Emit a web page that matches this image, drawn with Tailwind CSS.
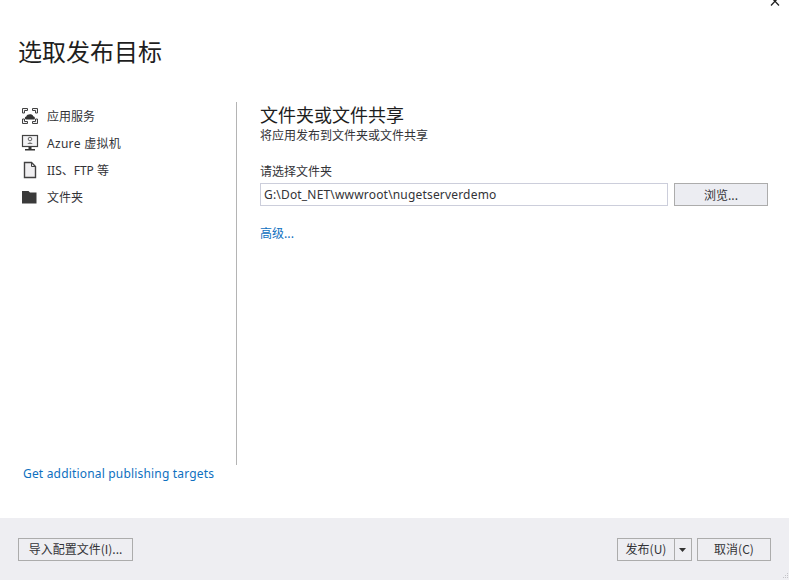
<!DOCTYPE html>
<html><head><meta charset="utf-8">
<script src="https://cdn.jsdelivr.net/npm/@tailwindcss/browser@4"></script>
</head>
<body class="m-0 bg-white">
<div class="relative w-[789px] h-[580px] overflow-hidden flex flex-col bg-white text-[#333337] font-['Noto_Sans_CJK_SC','Noto_Sans',sans-serif] text-[12px]">
  <svg class="absolute left-[770px] top-0" width="11" height="7" viewBox="0 0 11 7"><path d="M1 -3L9 5.5M9 -3L1 5.5" stroke="#222" stroke-width="1.3" fill="none"/></svg>
  <div class="h-[518px] flex flex-col">
    <div class="pl-[18px] pt-[35px] h-[102px] text-[24px] leading-[32px] text-[#1e1e1e]">选取发布目标</div>
    <div class="flex h-[363px]">
      <div class="w-[237px] border-r border-[#b4b4b4] flex flex-col pl-[21px] h-[363px]">
        <div class="flex items-center h-[27px] gap-[8px]">
          <svg width="18" height="18" viewBox="0 0 18 18" fill="none"><path d="M1.5 6V1.5H6.5V3.5H3.5V6ZM11.5 3.5V1.5H16.5V6H14.5V3.5ZM1.5 12V16.5H6.5V14.5H3.5V12ZM14.5 12V14.5H11.5V16.5H16.5V12Z" fill="#f0f0f2" stroke="#424242" stroke-width="1"/><path d="M5 12.5C3.5 12.5 3.5 9.8 5.3 9.6C5.8 6.8 11.4 6.4 12.2 9.2C14.2 9.2 14.5 12.5 13 12.5Z" fill="#333"/></svg>
          <span class="leading-[27px]">应用服务</span>
        </div>
        <div class="flex items-center h-[27px] gap-[8px] pt-[1px]">
          <svg class="-mt-[1px]" width="18" height="18" viewBox="0 0 18 18" fill="none"><rect x="1.5" y="1.5" width="15" height="11" fill="#f3f3f5" stroke="#424242" stroke-width="1.2"/><path d="M7.5 13H10.5V15H14V16.5H4V15H7.5Z" fill="#333"/><circle cx="9" cy="5" r="1.8" fill="none" stroke="#666"/><path d="M6.5 10C7 8 11 8 11.5 10Z" fill="#777"/></svg>
          <span class="leading-[27px] tracking-[0.3px] font-['Noto_Sans','Noto_Sans_CJK_SC',sans-serif]">Azure 虚拟机</span>
        </div>
        <div class="flex items-center h-[27px] gap-[8px] pt-[1px]">
          <svg class="-mt-[1px]" width="18" height="18" viewBox="0 0 18 18" fill="none"><path d="M3.5 1.5H10.5L14.5 5.5V16.5H3.5Z" fill="#f0eff1" stroke="#424242" stroke-width="1.4"/><path d="M10.5 1.5V5.5H14.5" stroke="#424242"/></svg>
          <span class="leading-[27px] font-['Noto_Sans','Noto_Sans_CJK_SC',sans-serif]">IIS、FTP 等</span>
        </div>
        <div class="flex items-center h-[27px] gap-[8px]">
          <svg width="18" height="18" viewBox="0 0 18 18"><path d="M1 3H7.5L9 4.5H15.5V15.5H1Z" fill="#3a3a3a"/></svg>
          <span class="leading-[27px]">文件夹</span>
        </div>
        <a class="mt-auto ml-[2px] mb-[-18px] text-[#0e70c0] text-[12px] leading-[18px] tracking-[0.18px] font-['Noto_Sans',sans-serif]">Get additional publishing targets</a>
      </div>
      <div class="flex-1 pl-[23px] pr-[21px] flex flex-col">
        <div class="text-[18px] leading-[24px] text-[#1e1e1e]">文件夹或文件共享</div>
        <div class="leading-[16px] mt-[1px]">将应用发布到文件夹或文件共享</div>
        <div class="leading-[16px] mt-[20px]">请选择文件夹</div>
        <div class="flex gap-[6px] mt-[4px]">
          <div class="w-[408px] h-[23px] border border-[#cccedb] px-[3px] leading-[21px] text-[12px] tracking-[0.18px] font-['Noto_Sans',sans-serif]">G:\Dot_NET\wwwroot\nugetserverdemo</div>
          <div class="w-[94px] h-[23px] border border-[#acacac] bg-[#ecedf2] text-center leading-[21px]">浏览...</div>
        </div>
        <a class="text-[#0e70c0] mt-[18px] leading-[17px]">高级...</a>
      </div>
    </div>
  </div>
  <div class="h-[62px] bg-[#eeeef2] flex items-center pl-[18px] pr-[18px] pt-[1px]">
    <div class="w-[115px] h-[23px] border border-[#acacac] text-center leading-[20px]">导入配置文件(I)...</div>
    <div class="ml-auto w-[75px] h-[23px] border border-[#acacac] flex">
      <div class="w-[57px] border-r border-[#acacac] text-center leading-[20px]">发布(U)</div>
      <div class="flex-1 flex items-center justify-center"><svg width="8" height="4" viewBox="0 0 8 4"><path d="M0 0H7L3.5 4Z" fill="#333"/></svg></div>
    </div>
    <div class="ml-[5px] w-[74px] h-[23px] border border-[#acacac] text-center leading-[20px]">取消(C)</div>
  </div>
  <svg class="absolute left-[781px] top-[572px]" width="8" height="8" viewBox="0 0 8 8"><path d="M6 1h1v1H6zM4 3h1v1H4zM6 3h1v1H6zM2 5h1v1H2zM4 5h1v1H4zM6 5h1v1H6z" fill="#c4c4c8"/></svg>
</div>
</body></html>
